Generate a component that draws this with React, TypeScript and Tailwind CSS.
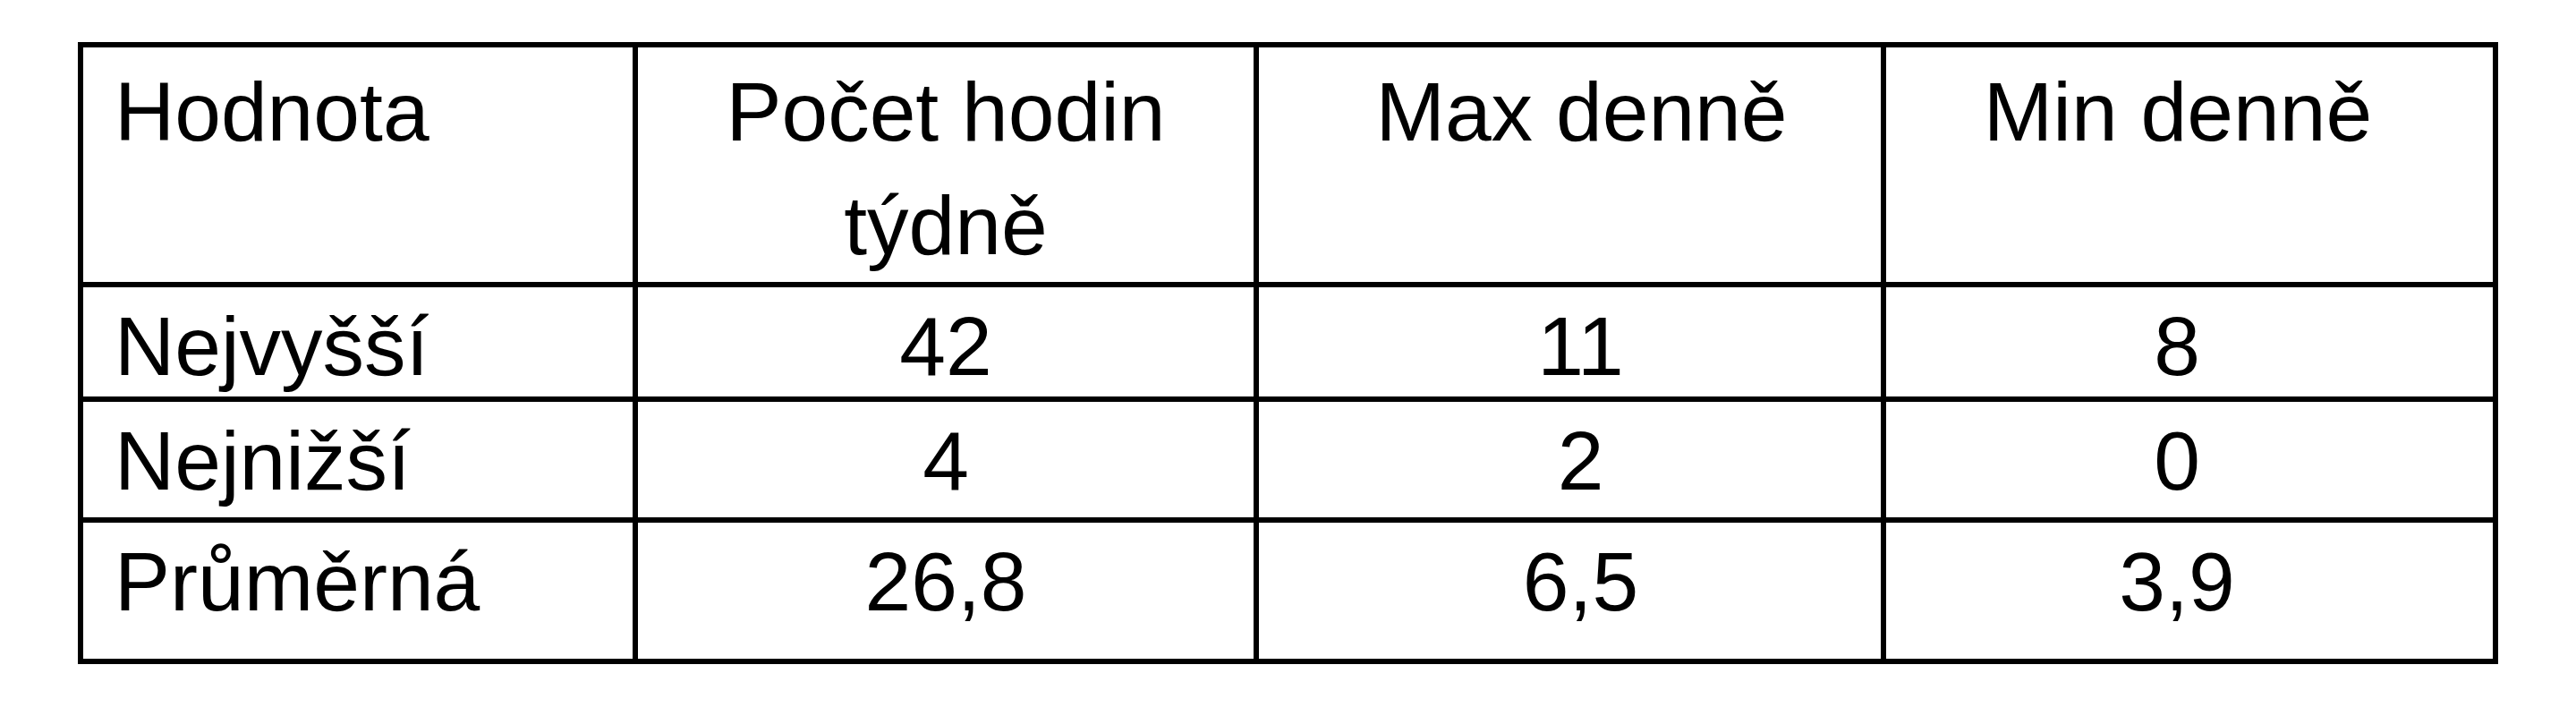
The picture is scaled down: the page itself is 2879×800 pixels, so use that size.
import React from "react";

const rows: [string, string, string, string][] = [
  ["Nejvyšší", "42", "11", "8"],
  ["Nejnižší", "4", "2", "0"],
  ["Průměrná", "26,8", "6,5", "3,9"],
];

export default function App() {
  return (
    <div className="min-h-[800px] w-full bg-white pl-[87px] pt-[47px] font-['Liberation_Sans',Arial,Helvetica,sans-serif] text-black">
      <div className="grid w-fit grid-cols-[614px_688px_695px_678px] grid-rows-[262px_122px_129px_152px] gap-[6px] bg-black p-[6px] text-[93px]">
        <div className="bg-white pl-[35px] pt-[9px] leading-[127px]">Hodnota</div>
        <div className="bg-white px-[20px] pt-[9px] text-center leading-[127px]">Počet hodin týdně</div>
        <div className="bg-white pl-[26px] pt-[9px] text-center leading-[127px]">Max denně</div>
        <div className="bg-white pr-[26px] pt-[9px] text-center leading-[127px]">Min denně</div>
        {rows.map((r) => (
          <React.Fragment key={r[0]}>
            <div className="bg-white pl-[35px] pt-[13px] leading-[107px]">{r[0]}</div>
            <div className="bg-white pt-[13px] text-center leading-[107px]">{r[1]}</div>
            <div className="bg-white pl-[24px] pt-[13px] text-center leading-[107px]">{r[2]}</div>
            <div className="bg-white pr-[28px] pt-[13px] text-center leading-[107px]">{r[3]}</div>
          </React.Fragment>
        ))}
      </div>
    </div>
  );
}
